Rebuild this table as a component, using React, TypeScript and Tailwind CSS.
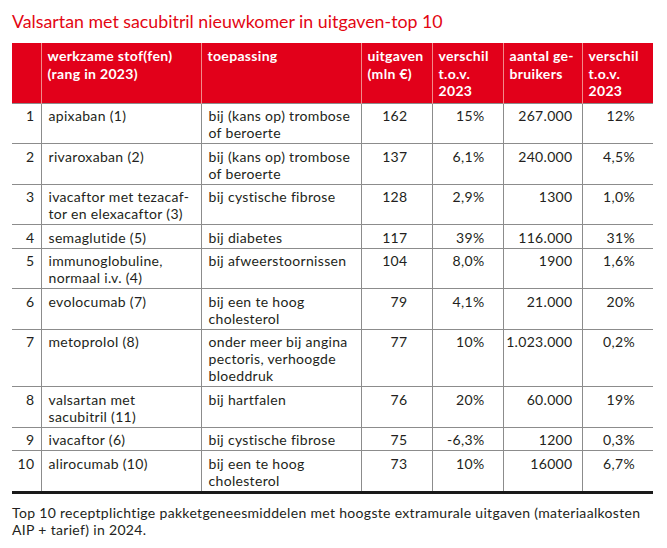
const rows = [
  { n: "1", stof: "apixaban (1)", toep: "bij (kans op) trombose of beroerte", uit: "162", v1: "15%", aantal: "267.000", v2: "12%" },
  { n: "2", stof: "rivaroxaban (2)", toep: "bij (kans op) trombose of beroerte", uit: "137", v1: "6,1%", aantal: "240.000", v2: "4,5%" },
  { n: "3", stof: "ivacaftor met tezacaf-\u200Btor en elexacaftor (3)", toep: "bij cystische fibrose", uit: "128", v1: "2,9%", aantal: "1300", v2: "1,0%" },
  { n: "4", stof: "semaglutide (5)", toep: "bij diabetes", uit: "117", v1: "39%", aantal: "116.000", v2: "31%" },
  { n: "5", stof: "immunoglobuline, normaal i.v. (4)", toep: "bij afweerstoornissen", uit: "104", v1: "8,0%", aantal: "1900", v2: "1,6%" },
  { n: "6", stof: "evolocumab (7)", toep: "bij een te hoog cholesterol", uit: "79", v1: "4,1%", aantal: "21.000", v2: "20%" },
  { n: "7", stof: "metoprolol (8)", toep: "onder meer bij angina pectoris, verhoogde bloeddruk", uit: "77", v1: "10%", aantal: "1.023.000", v2: "0,2%" },
  { n: "8", stof: "valsartan met sacubitril (11)", toep: "bij hartfalen", uit: "76", v1: "20%", aantal: "60.000", v2: "19%" },
  { n: "9", stof: "ivacaftor (6)", toep: "bij cystische fibrose", uit: "75", v1: "-6,3%", aantal: "1200", v2: "0,3%" },
  { n: "10", stof: "alirocumab (10)", toep: "bij een te hoog cholesterol", uit: "73", v1: "10%", aantal: "16000", v2: "6,7%" },
];

const th = "border-l border-[#f28a8a] first:border-l-0 px-[6px] pt-[4px] pb-[3px] text-left align-top font-bold leading-[17.5px]";
const td = "border-l border-t border-[#8c8c8c] first:border-l-0 pt-[3.5px] pb-[2px] align-top";

export default function App() {
  return (
    <div className="min-h-screen bg-white px-[12px] pt-[10px] text-[#231f20]" style={{ fontFamily: "Lato, 'Noto Sans', sans-serif" }}>
      <h1 className="text-[17.8px] leading-[22px] text-[#e30613]">
        Valsartan met sacubitril nieuwkomer in uitgaven-top 10
      </h1>

      <table className="mt-[11px] w-[641px] table-fixed border-collapse text-[14px] leading-[17px] tracking-[0.32px]">
        <colgroup>
          <col className="w-[29px]" />
          <col className="w-[160px]" />
          <col className="w-[160px]" />
          <col className="w-[71px]" />
          <col className="w-[71px]" />
          <col className="w-[79px]" />
          <col className="w-[71px]" />
        </colgroup>
        <thead>
          <tr className="h-[58px] bg-[#e2001a] text-white">
            <th className={th}></th>
            <th className={th}>werkzame stof(fen) (rang in 2023)</th>
            <th className={th}>toepassing</th>
            <th className={th}>uitgaven (mln €)</th>
            <th className={th}>verschil t.o.v. 2023</th>
            <th className={th}>aantal ge-&#8203;bruikers</th>
            <th className={th}>verschil t.o.v. 2023</th>
          </tr>
        </thead>
        <tbody className="border-b-[3px] border-[#1a1a1a]">
          {rows.map((r) => (
            <tr key={r.n}>
              <td className={`${td} pr-[6px] text-right`}>{r.n}</td>
              <td className={`${td} px-[7px]`}>{r.stof}</td>
              <td className={`${td} px-[7px]`}>{r.toep}</td>
              <td className={`${td} pr-[24px] text-right`}>{r.uit}</td>
              <td className={`${td} pr-[18px] text-right`}>{r.v1}</td>
              <td className={`${td} pr-[9px] text-right`}>{r.aantal}</td>
              <td className={`${td} pr-[18px] text-right`}>{r.v2}</td>
            </tr>
          ))}
        </tbody>
      </table>

      <p className="mt-[10px] w-[645px] text-[14px] leading-[17.5px] tracking-[0.32px]">
        Top 10 receptplichtige pakketgeneesmiddelen met hoogste extramurale uitgaven (materiaalkosten AIP + tarief) in 2024.
      </p>
    </div>
  );
}
